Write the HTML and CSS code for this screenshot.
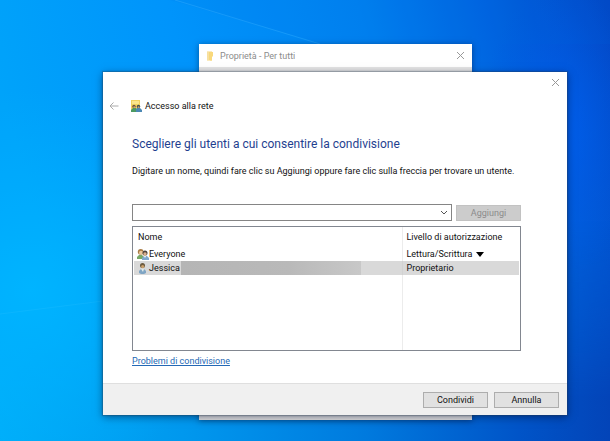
FILE: index.html
```html
<!DOCTYPE html>
<html lang="it">
<head>
<meta charset="utf-8">
<title>Accesso alla rete</title>
<link rel="stylesheet" href="styles.css">
</head>
<body>
<svg class="wallpaper" viewBox="0 0 610 441" preserveAspectRatio="none" aria-hidden="true">
  <defs>
    <linearGradient id="sky" x1="0" y1="0.2" x2="1" y2="0">
      <stop offset="0" stop-color="#00a3fa"/>
      <stop offset="0.3" stop-color="#0094fb"/>
      <stop offset="0.6" stop-color="#0082f0"/>
      <stop offset="0.8" stop-color="#0064e0"/>
      <stop offset="1" stop-color="#0346c4"/>
    </linearGradient>
    <linearGradient id="floor" x1="0" y1="0" x2="1" y2="0">
      <stop offset="0" stop-color="#00aef8"/>
      <stop offset="0.3" stop-color="#0098ee"/>
      <stop offset="0.6" stop-color="#007ade"/>
      <stop offset="0.85" stop-color="#0054c8"/>
      <stop offset="1" stop-color="#0344b8"/>
    </linearGradient>
    <linearGradient id="fade" x1="0" y1="0" x2="0" y2="1">
      <stop offset="0.5" stop-color="#000"/>
      <stop offset="0.9" stop-color="#fff"/>
    </linearGradient>
    <mask id="lower"><rect width="610" height="441" fill="url(#fade)"/></mask>
    <radialGradient id="left-glow">
      <stop offset="0" stop-color="#00b4ff"/>
      <stop offset="1" stop-color="#00b0ff" stop-opacity="0"/>
    </radialGradient>
    <radialGradient id="right-glow">
      <stop offset="0" stop-color="#0060f2"/>
      <stop offset="1" stop-color="#0058e4" stop-opacity="0"/>
    </radialGradient>
  </defs>
  <rect width="610" height="441" fill="url(#sky)"/>
  <rect width="610" height="441" fill="url(#floor)" mask="url(#lower)"/>
  <ellipse cx="30" cy="290" rx="190" ry="200" fill="url(#left-glow)"/>
  <ellipse cx="560" cy="130" rx="80" ry="150" fill="url(#right-glow)" opacity="0.8"/>
  <path d="M170 0 L325 44 H610 V0 Z" fill="#0068e0" opacity="0.1"/>
  <path d="M175 0 L320 44" stroke="#3eb4ff" opacity="0.35"/>
  <path d="M0 314 L103 301" stroke="#48caff" opacity="0.15"/>
</svg>

<section class="window properties" aria-label="Proprietà - Per tutti">
  <header class="properties-bar">
    <svg class="folder" viewBox="0 0 10 10" aria-hidden="true">
      <path d="M2 0.5h5v9H2z" fill="#f6d77c"/>
      <path d="M5 1h3v4l-1 1v3.500H5z" fill="#f9d97c"/>
      <path d="M2 1h2v8H2z" fill="#f7e0a0"/>
    </svg>
    <span class="properties-title">Proprietà - Per tutti</span>
    <button class="close" aria-label="Chiudi"><svg viewBox="0 0 9 9"><path d="M1 1l7 7M8 1l-7 7"/></svg></button>
  </header>
</section>

<main class="window dialog">
  <div class="dialog-bar">
    <button class="close" aria-label="Chiudi"><svg viewBox="0 0 9 9"><path d="M1 1l7 7M8 1l-7 7"/></svg></button>
  </div>
  <header class="dialog-header">
    <button class="back" aria-label="Indietro" disabled><svg viewBox="0 0 10 10"><path d="M1 5h8.500M4.500 1.500L1 5l3.500 3.500"/></svg></button>
    <svg class="share" viewBox="0 0 12 12" aria-hidden="true">
      <path d="M1 0h9v11H1z" fill="#f3d35f"/>
      <path d="M2 1h7v3H2z" fill="#fbe68d"/>
      <path d="M1 12v-2l2-2h3v4z" fill="#4d9a62"/>
      <path d="M6 12V9l1-1h3l2 2v2z" fill="#4b88b4"/>
      <circle cx="4" cy="6.500" r="1.700" fill="#68513b"/>
      <circle cx="8.500" cy="6.500" r="1.700" fill="#3d4b50"/>
      <circle cx="4.200" cy="7.200" r="1" fill="#d1a66f"/>
      <circle cx="8.600" cy="7.200" r="1" fill="#c39a70"/>
    </svg>
    <span>Accesso alla rete</span>
  </header>

  <div class="content">
    <h1>Scegliere gli utenti a cui consentire la condivisione</h1>
    <label class="hint" for="user">Digitare un nome, quindi fare clic su Aggiungi oppure fare clic sulla freccia per trovare un utente.</label>
    <div class="picker">
      <div class="combo">
        <input id="user" type="text" autocomplete="off">
        <button class="drop" aria-label="Mostra utenti"><svg viewBox="0 0 8 6"><path d="M1 1l3 3 3-3"/></svg></button>
      </div>
      <button class="push" disabled>Aggiungi</button>
    </div>
    <div class="list">
      <table>
        <thead>
          <tr><th scope="col">Nome</th><th class="level" scope="col">Livello di autorizzazione</th></tr>
        </thead>
        <tbody>
          <tr>
            <td><div class="person">
              <svg viewBox="0 0 12 12" aria-hidden="true">
                <path d="M0 11V9l2-2h3l2 2v2z" fill="#79a867"/>
                <path d="M5 12v-2l2-2h3l2 2v2z" fill="#7fa9cf"/>
                <circle cx="3.700" cy="3.800" r="2.900" fill="#a87b45"/>
                <circle cx="4" cy="4.700" r="2" fill="#edc99c"/>
                <circle cx="8" cy="5" r="2.500" fill="#4f443e"/>
                <circle cx="8" cy="6" r="1.700" fill="#dbb08d"/>
                <path d="M7 8l1 2 1-2z" fill="#fff"/>
              </svg>
              <span>Everyone</span>
            </div></td>
            <td class="level"><button class="permission">Lettura/Scrittura <svg viewBox="0 0 8 5" aria-hidden="true"><path d="M0 0h8L4 5z"/></svg></button></td>
          </tr>
          <tr class="selected">
            <td><div class="person">
              <svg viewBox="0 0 12 12" aria-hidden="true">
                <path d="M2 11V9l2-2h3l2 2v2l-2 1H4z" fill="#7fa5c4"/>
                <path d="M4 7h3l-1 3z" fill="#e4ece9"/>
                <circle cx="5.500" cy="3.500" r="2.500" fill="#6c5a3e"/>
                <circle cx="5.700" cy="4.600" r="1.600" fill="#c99f6b"/>
              </svg>
              <span>Jessica</span>
              <span class="masked"></span>
            </div></td>
            <td class="level">Proprietario</td>
          </tr>
          <tr class="filler"><td></td><td class="level"></td></tr>
        </tbody>
      </table>
    </div>
    <a class="help" href="#">Problemi di condivisione</a>
  </div>

  <footer>
    <button class="push">Condividi</button>
    <button class="push">Annulla</button>
  </footer>
</main>
</body>
</html>
```
FILE: styles.css
```css
* {
  box-sizing: border-box;
}

body {
  margin: 0;
  min-height: 100vh;
  position: relative;
  overflow: hidden;
  background: #0090f0;
  color: #111;
  font: 9px/14px Roboto, "Open Sans", sans-serif;
}

button,
input {
  margin: 0;
  padding: 0;
  border: 0;
  background: none;
  color: inherit;
  font: inherit;
}

svg {
  display: block;
  flex: none;
}

.wallpaper {
  position: absolute;
  width: 100%;
  height: 100%;
}

/* Windows placed on the desktop */
.window {
  position: absolute;
  background: #fff;
}

.properties {
  inset: 44px 138px 21px 199px;
  background: #e4e4e4;
  box-shadow: 0 1px 6px rgba(0, 20, 60, 0.5);
}

.properties-bar {
  display: flex;
  align-items: center;
  gap: 5px;
  height: 23px;
  padding: 0 7px 0 6px;
  background: #fff;
  color: #8c8c8c;
}

.properties-title {
  flex: 1;
}

.folder {
  width: 10px;
  height: 10px;
}

.dialog {
  display: flex;
  flex-direction: column;
  inset: 72px 43px 26px 103px;
  box-shadow: 0 0 1px 1px rgba(40, 60, 80, 0.3), 0 2px 8px rgba(0, 10, 40, 0.5);
}

.close svg {
  width: 9px;
  height: 9px;
}

.close path,
.back path,
.drop path {
  fill: none;
  stroke: #999;
}

.dialog-bar {
  display: flex;
  justify-content: flex-end;
  padding: 6px 7px;
}

.dialog-header {
  display: flex;
  align-items: center;
  gap: 3px;
  padding: 6px 6px 5px;
}

.back {
  margin-right: 8px;
}

.back svg {
  width: 10px;
  height: 10px;
}

.back path {
  stroke: #aaa;
}

.share {
  width: 12px;
  height: 12px;
}

.content {
  flex: 1;
  display: flex;
  flex-direction: column;
  align-items: stretch;
  padding: 16px 46px 15px 29px;
}

h1 {
  margin: 0;
  color: #1f3f8f;
  font-size: 12px;
  font-weight: 400;
  line-height: 20px;
}

.hint {
  margin-top: 10px;
  white-space: nowrap;
}

.picker {
  display: flex;
  align-items: center;
  gap: 4px;
  margin: 26px 0 5px;
}

.combo {
  flex: 1;
  display: flex;
  height: 17px;
  border: 1px solid #858585;
}

.combo input {
  flex: 1;
  min-width: 0;
  padding: 0 4px;
  outline: 0;
}

.drop {
  padding: 0 3px;
}

.drop svg {
  width: 8px;
  height: 6px;
}

.drop path {
  stroke: #555;
}

.push {
  width: 65px;
  height: 16px;
  border: 1px solid #adadad;
  background: #e1e1e1;
  line-height: 14px;
}

.push:disabled {
  border-color: #c2c2c2;
  background: #ccc;
  color: #8b8b8b;
}

.list {
  flex: 1;
  display: flex;
  border: 1px solid #828790;
  padding: 0 1px;
}

table {
  flex: 1;
  height: 100%;
  border-collapse: collapse;
  table-layout: fixed;
}

th,
td {
  height: 14px;
  padding: 0 0 0 4px;
  text-align: left;
  font-weight: 400;
}

td {
  padding-left: 3px;
}

th {
  height: 20px;
}

.level {
  width: 117px;
  padding-left: 4px;
  border-left: 1px solid #ececec;
}

.selected {
  background: #d9d9d9;
}

.selected .level {
  border-left-color: #d2d2d2;
}

.filler td {
  height: auto;
}

.person {
  display: flex;
  align-items: center;
}

.person svg {
  width: 12px;
  height: 12px;
}

.masked {
  width: 180px;
  height: 14px;
  margin-left: 1px;
  background: linear-gradient(90deg, #b5b5b5, #b9b9b9 60%, #c8c8c8);
}

.permission {
  display: flex;
  align-items: center;
  gap: 4px;
}

.permission svg {
  width: 8px;
  height: 5px;
}

.help {
  align-self: flex-start;
  margin-top: 3px;
  color: #2468b5;
}

footer {
  display: flex;
  justify-content: flex-end;
  gap: 6px;
  padding: 8px 8px 7px;
  border-top: 1px solid #dfdfdf;
  background: #f0f0f0;
}
```
